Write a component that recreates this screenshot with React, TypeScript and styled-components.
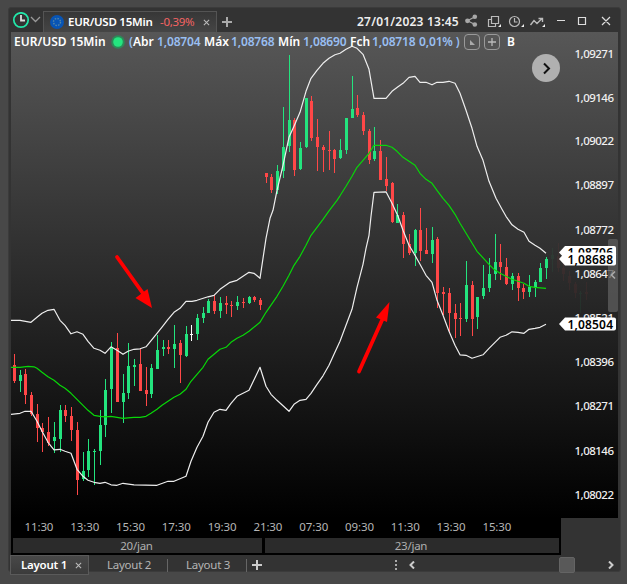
import React from 'react';
import styled, { createGlobalStyle } from 'styled-components';

const BLUE = '#99bff2';
const GREEN = '#23e47e';
const RED = '#ff4747';

const GlobalStyle = createGlobalStyle`
  * { box-sizing: border-box; }
  body { margin: 0; background: #484848; font-family: "Noto Sans", "Open Sans", sans-serif; overflow: hidden; }
  svg { display: block; flex: none; }
`;

const Page = styled.main`
  width: 627px;
  height: 584px;
  padding: 7px 6px 12px 8px;
  background: #484848;
`;

const Window = styled.section`
  width: 613px;
  height: 565px;
  padding: 0 2px;
  background: #333;
  border: 1px solid #3b3b3b;
  border-radius: 3px;
  display: flex;
  flex-direction: column;
`;

const TitleBar = styled.header`
  height: 24px;
  display: flex;
  align-items: flex-end;
  flex: none;
`;

const ClockMenu = styled.div`
  width: 32px;
  height: 24px;
  padding: 4px 0 0 1px;
`;

const InstrumentTab = styled.div`
  width: 174px;
  height: 21px;
  padding: 0 6px 0 6px;
  background: linear-gradient(#373737, #454545);
  border: 1px solid #545454;
  border-bottom: 0;
  display: flex;
  align-items: center;
`;

const Label = styled.span<{ $w: number; $size?: number; $color?: string; $weight?: number; $ml?: number; $ls?: number }>`
  width: ${p => p.$w}px;
  margin-left: ${p => p.$ml ?? 0}px;
  font-size: ${p => p.$size ?? 11}px;
  font-weight: ${p => p.$weight ?? 600};
  letter-spacing: ${p => p.$ls ?? 0}px;
  color: ${p => p.$color ?? '#fff'};
  line-height: 16px;
  white-space: nowrap;
  flex: none;
`;

const QuoteText = styled.span<{ $w: number; $blue?: boolean; $ml?: number }>`
  width: ${p => p.$w}px;
  margin-left: ${p => p.$ml ?? 0}px;
  font-size: 12px;
  font-weight: 600;
  letter-spacing: ${p => (p.$blue ? -0.15 : 0)}px;
  color: ${p => (p.$blue ? BLUE : '#fff')};
  line-height: 16px;
  white-space: nowrap;
  flex: none;
`;

const Paren = styled.span`
  color: ${BLUE};
`;

const TitleTools = styled.div`
  flex: 1;
  height: 21px;
  display: flex;
  align-items: center;
`;

const IconSlot = styled.div<{ $w: number; $ml: number }>`
  width: ${p => p.$w}px;
  margin-left: ${p => p.$ml}px;
  flex: none;
`;

const ChartArea = styled.div`
  width: 607px;
  height: 486px;
  position: relative;
  flex: none;
`;

const Quote = styled.div`
  position: absolute;
  left: 3px;
  top: 2px;
  height: 16px;
  display: flex;
  align-items: center;
`;

const SquareButton = styled.span<{ $ml: number }>`
  width: 16px;
  height: 16px;
  margin-left: ${p => p.$ml}px;
  border: 1px solid #999;
  border-radius: 4px;
  display: flex;
  align-items: center;
  justify-content: center;
  flex: none;
`;

const NextButton = styled.button`
  position: absolute;
  left: 521px;
  top: 22px;
  width: 28px;
  height: 28px;
  padding: 0;
  border: 0;
  border-radius: 50%;
  background: #b0b0b0;
`;

const TimeAxis = styled.div`
  width: 550px;
  height: 37px;
  background: #000;
  flex: none;
`;

const Hours = styled.div`
  height: 20px;
  padding-left: 5px;
  display: flex;
`;

const Hour = styled.span`
  width: 45.8px;
  font-size: 11.5px;
  line-height: 18px;
  text-align: center;
  color: #b6b6b6;
  letter-spacing: -0.1px;
  flex: none;
`;

const Days = styled.div`
  display: flex;
  gap: 3px;
  padding: 0 2px;
`;

const Day = styled.span<{ $w: number }>`
  width: ${p => p.$w}px;
  height: 15px;
  padding-right: 2px;
  background: #2b2b2b;
  color: #b0b0b0;
  font-size: 11.5px;
  letter-spacing: -0.25px;
  line-height: 16px;
  text-align: center;
`;

const TabBar = styled.footer`
  height: 20px;
  display: flex;
  align-items: center;
  margin-left: -1px;
  flex: none;
`;

const LayoutTab = styled.div<{ $w: number; $active?: boolean }>`
  width: ${p => p.$w}px;
  height: 20px;
  display: flex;
  align-items: center;
  border: 1px solid ${p => (p.$active ? '#5a5a5a' : 'transparent')};
  background: ${p => (p.$active ? 'linear-gradient(#484848, #3b3b3b)' : 'transparent')};
  flex: none;
`;

const Divider = styled.i`
  width: 1px;
  height: 13px;
  background: #666;
`;

const ScrollThumb = styled.div`
  width: 16px;
  height: 16px;
  margin: 0 33px 0 144px;
  border: 1px solid #646464;
  border-radius: 2px;
  background: #595959;
`;

// x, high, low, body top, body bottom, kind (g = up, r = down, w = flat)
const candles: [number, number, number, number, number, string][] = [
  [14, 354, 383, 365, 381, 'r'], [20, 370, 392, 375, 381, 'g'], [25, 369, 404, 374, 395, 'r'],
  [31, 392, 416, 395, 414, 'r'], [37, 404, 442, 414, 428, 'r'], [42, 423, 452, 428, 432, 'r'],
  [48, 417, 446, 432, 443, 'r'], [54, 422, 453, 437, 441, 'g'], [60, 405, 452, 410, 439, 'g'],
  [65, 405, 422, 410, 416, 'r'], [71, 407, 441, 416, 430, 'r'], [77, 422, 495, 430, 480, 'r'],
  [83, 452, 481, 471, 479, 'g'], [88, 439, 477, 451, 470, 'g'], [94, 449, 485, 451, 452, 'g'],
  [100, 410, 465, 425, 451, 'g'], [105, 379, 437, 390, 425, 'g'], [111, 342, 413, 347, 389, 'g'],
  [117, 333, 402, 348, 402, 'r'], [123, 374, 423, 393, 402, 'g'], [128, 343, 399, 366, 393, 'g'],
  [134, 359, 386, 365, 367, 'g'], [140, 349, 391, 364, 391, 'r'], [146, 367, 406, 390, 394, 'r'],
  [151, 364, 398, 368, 394, 'g'], [157, 335, 369, 350, 369, 'g'], [163, 340, 356, 347, 349, 'g'],
  [168, 340, 354, 347, 349, 'r'], [174, 325, 368, 344, 349, 'g'], [180, 340, 383, 343, 355, 'r'],
  [186, 326, 357, 334, 356, 'g'], [191, 325, 341, 334, 335, 'w'], [197, 314, 340, 318, 334, 'g'],
  [203, 307, 323, 313, 318, 'g'], [208, 299, 313, 301, 313, 'g'], [214, 295, 314, 301, 311, 'r'],
  [220, 297, 318, 303, 311, 'g'], [226, 296, 314, 303, 305, 'r'], [231, 301, 317, 305, 306, 'r'],
  [237, 296, 310, 302, 306, 'g'], [243, 298, 308, 302, 303, 'r'], [249, 296, 304, 297, 303, 'g'],
  [254, 296, 302, 297, 300, 'r'], [260, 298, 310, 300, 305, 'r'], [266, 173, 183, 173, 177, 'r'],
  [271, 174, 193, 177, 190, 'r'], [277, 165, 194, 171, 190, 'g'], [283, 107, 178, 147, 171, 'g'],
  [289, 55, 152, 120, 146, 'g'], [294, 118, 176, 120, 170, 'r'], [300, 142, 170, 148, 169, 'g'],
  [306, 98, 148, 98, 147, 'g'], [311, 96, 141, 101, 138, 'r'], [317, 119, 171, 137, 147, 'r'],
  [323, 145, 172, 147, 150, 'r'], [329, 131, 170, 150, 151, 'r'], [334, 149, 173, 150, 159, 'r'],
  [340, 139, 159, 150, 158, 'g'], [346, 118, 154, 118, 150, 'g'], [352, 76, 118, 109, 118, 'g'],
  [357, 95, 117, 108, 115, 'r'], [363, 112, 135, 115, 131, 'r'], [369, 129, 164, 131, 160, 'r'],
  [374, 127, 161, 151, 159, 'g'], [380, 140, 180, 151, 180, 'r'], [386, 157, 191, 179, 186, 'r'],
  [392, 182, 223, 183, 222, 'r'], [397, 204, 223, 215, 223, 'g'], [403, 212, 258, 215, 244, 'r'],
  [409, 234, 255, 244, 253, 'r'], [415, 229, 266, 230, 253, 'g'], [420, 208, 261, 230, 251, 'r'],
  [426, 228, 254, 250, 254, 'r'], [432, 227, 263, 240, 254, 'g'], [437, 237, 308, 239, 293, 'r'],
  [443, 287, 315, 292, 294, 'r'], [449, 288, 332, 293, 313, 'r'], [455, 304, 338, 313, 319, 'r'],
  [460, 303, 336, 318, 319, 'r'], [466, 261, 322, 285, 319, 'g'], [472, 281, 336, 285, 319, 'r'],
  [477, 297, 329, 297, 317, 'g'], [483, 265, 299, 288, 296, 'g'], [489, 258, 292, 274, 288, 'g'],
  [495, 234, 280, 262, 274, 'g'], [500, 244, 280, 262, 267, 'r'], [506, 258, 285, 267, 284, 'r'],
  [512, 273, 290, 276, 284, 'g'], [518, 273, 301, 276, 288, 'r'], [523, 284, 299, 288, 292, 'r'],
  [529, 275, 297, 287, 292, 'g'], [535, 280, 297, 282, 288, 'g'], [540, 263, 282, 268, 282, 'g'],
  [546, 257, 279, 259, 268, 'g'],
];

// Later candles, faded out under the price scale
const faded: [number, number, number, number, number, string][] = [
  [552, 248, 272, 255, 259, 'g'], [558, 243, 272, 256, 268, 'r'], [563, 262, 281, 268, 274, 'r'],
  [569, 271, 290, 276, 283, 'r'], [575, 282, 298, 284, 293, 'r'], [580, 291, 313, 293, 294, 'g'],
  [586, 282, 300, 292, 294, 'r'],
];

const upper = '11,320 20,320 31,322 37,317 42,313 48,310 54,309 60,320 65,325 71,333.5 77,331.5 83,334 88,341 94,348 100,350 105,353 111,346.5 117,350 123,354 128,351 134,349 140,348.5 146,346.5 157,333 163,325.5 168,319 174,312 180,308 186,301 192,301 197,300 208,296.5 214,295 220,289 230,282 237,280 249,272 254,273 260,278 266,238 270,218 273,210 277,190 283,165 289,137 294,126 300,112 306,91 311,78 317,70 323,63 329,58 335,54.5 340,53 346,49 352,46 357,48 363,54 369,69 374,98 386,98 392,91 398,86.5 403,83 409,77 415,76 420,82 426,82 432,84.5 437,82 443,82 449,81 455,83 460,93 466,110 472,128 477,146 483,160 489,181 496,198 502,209 506,216 512,224.5 518,229 524,232 529,241 535,245 540,248 546,253';
const middle = '11,367 20,367 28,366 34,366.5 37,368 42,372 48,376.5 54,380 60,385 65,388 71,393 77,399 83,405 88,410 94,415 100,416 105,416.5 111,416 123,418 128,417.5 134,417 140,417 146,416 151,413 157,409 162,405 168,401 174,397 180,394 186,389 191,381 197,374 203,367 208,359 214,354 220,349 226,347 231,342 237,338 243,335 249,331 260,322 266,312 277,296 283,286 289,275 294,265 300,256 306,245 311,235 317,227 323,219 329,210.5 337,200 340,195.5 346,186 352,176 357,167 363,160 369,153 374,145 386,145 392,147 397,151 403,157 409,161 415,165 420,173 426,179 432,183 437,190 443,198 449,205 455,214 460,223 477,251 489,264 494,269 500,273 506,276 512,279 518,281 524,283 529,286 535,287 546,288';
const lower = '11,414 20,413 25,411 31,411 37,421 42,431 48,442 54,449.5 60,449 65,451 71,453 77,469 83,476 88,480 94,482 100,483 105,482 111,484.5 117,485 123,483 134,484.5 157,485 168,481 174,481 186,476 191,461 197,447 203,436 208,422 214,412 220,409 226,410 231,403 237,396 249,390 260,367 266,386 271,394 277,400 289,411 294,404 300,400 306,399 311,393 317,384 323,375.5 329,365 334,354 340,341 346,325 352,309 357,287 363,264 366,248 369,235 371,216 374,192 386,191.5 392,203 398,216 403,230 409,245 415,255 420,264 426,275 432,282 437,300 443,315 449,331 455,345 460,354.5 466,355 472,358 483,354.5 489,348 495,342 500,337 506,335 512,331.5 518,332 524,333 529,329 535,328 540,327 546,324';

const prices: [string, number][] = [
  ['1,09271', 54], ['1,09146', 98], ['1,09022', 141], ['1,08897', 185], ['1,08772', 230], ['1,08647', 274],
  ['1,08521', 318], ['1,08396', 362], ['1,08271', 406], ['1,08146', 451], ['1,08022', 495],
];
const tags: [string, number][] = [['1,08706', 252.5], ['1,08688', 259], ['1,08504', 324]];

const PriceText = styled.text<{ $tag?: boolean }>`
  font-family: "Noto Sans", sans-serif;
  font-size: ${p => (p.$tag ? 12 : 11.5)}px;
  font-weight: ${p => (p.$tag ? 600 : 500)};
  fill: ${p => (p.$tag ? '#000' : '#f0f0f0')};
`;

const Candles = ({ data }: { data: typeof candles }) => (
  <>
    {data.map(([x, hi, lo, top, bottom, kind]) => (
      <g key={x} fill={kind === 'g' ? GREEN : kind === 'r' ? RED : '#fff'}>
        <rect x={x} y={hi} width="1" height={lo - hi} />
        <rect x={x - 1} y={top} width="3" height={bottom - top} />
      </g>
    ))}
  </>
);

const Chart = () => (
  <svg width="607" height="486" viewBox="11 32 607 486">
    <defs>
      <linearGradient id="sky" x1="0" y1="0" x2="0" y2="1">
        <stop offset="0" stopColor="#575757" />
        <stop offset="1" stopColor="#000" />
      </linearGradient>
    </defs>
    <rect x="11" y="32" width="607" height="486" fill="url(#sky)" />
    <g shapeRendering="crispEdges">
      <Candles data={candles} />
      <g opacity="0.06"><Candles data={faded} /></g>
    </g>
    <g fill="none" strokeWidth="1.2" strokeLinejoin="round" transform="translate(0 .3)">
      <polyline points={middle} stroke="#08d808" />
      <polyline points={upper} stroke="#eee" />
      <polyline points={lower} stroke="#eee" />
    </g>
    <g fill="#f00" stroke="#f00">
      <path d="M117 257L144.500 295.500" strokeWidth="3.8" strokeLinecap="round" />
      <path d="M152 308L135.500 298L147.500 289Z" stroke="none" />
      <path d="M359 371.500L383 318" strokeWidth="3.8" strokeLinecap="round" />
      <path d="M389.500 302L376 317.500L387 322Z" stroke="none" />
    </g>
    {prices.map(([t, y]) => (
      <PriceText key={t} x="574.5" y={y + 4} textLength="39.5">{t}</PriceText>
    ))}
    <rect x="608" y="239" width="10" height="73" rx="2" fill="#5c5c5c" fillOpacity="0.78" />
    <path d="M615 271.500L611.500 275L615 278.500" fill="none" stroke="#aaa" strokeWidth="1.6" />
    {tags.map(([t, y]) => (
      <g key={t}>
        <path d={`M559 ${y}L565 ${y - 6.5}H614Q616 ${y - 6.5} 616 ${y - 4.5}V${y + 4.5}Q616 ${y + 6.5} 614 ${y + 6.5}H565Z`} fill="#fff" />
        <PriceText $tag x="567.5" y={y + 4.5} textLength="45.5">{t}</PriceText>
      </g>
    ))}
  </svg>
);

const Cross = ({ size = 7, color = '#bbb', width = 1.2 }: { size?: number; color?: string; width?: number }) => (
  <svg width={size} height={size} viewBox="0 0 8 8" fill="none" stroke={color} strokeWidth={width}><path d="M1 1L7 7M7 1L1 7" /></svg>
);
const Plus = ({ size = 10, color = '#aaa', width = 2 }: { size?: number; color?: string; width?: number }) => (
  <svg width={size} height={size} viewBox="0 0 10 10" stroke={color} strokeWidth={width}><path d="M5 0V10M0 5H10" /></svg>
);
const Chevron = ({ color, left }: { color: string; left?: boolean }) => (
  <svg width="6" height="8" viewBox="0 0 6 8" fill="none" stroke={color} strokeWidth="2"><path d={left ? 'M5 .5L1.5 4L5 7.5' : 'M1 .5L4.5 4L1 7.5'} /></svg>
);

const WindowIcons = () => (
  <svg width="150" height="20" viewBox="465 10 150 20" fill="none" stroke="#bbb" strokeWidth="1.2">
    <g transform="translate(0 -.5)">
      <path d="M475 15.3L467.5 19.3L475 23" stroke="#a8a8a8" />
      <g fill="#a8a8a8" stroke="none"><circle cx="474.8" cy="15.3" r="2.3" /><circle cx="467.5" cy="19.3" r="2.4" /><circle cx="474.8" cy="23" r="2.3" /></g>
    </g>
    <path d="M491.5 14.5H498.5V21.5H491.5ZM491.5 17.5H488.5V24.5H495.5V21.5" />
    <circle cx="514.5" cy="19.5" r="5" /><path d="M514.5 16V20H517.5" />
    <path d="M530.5 23L534 18.5L537 21.5L542 16.5M538.5 16.5H542.5V20" strokeWidth="1.4" />
    <path d="M498 25H501V22ZM521 25H524V22ZM542 25H545V22Z" fill="#eee" stroke="none" />
    <path d="M557 18.5H565M578.5 15.5H585.5V22.5H578.5ZM602 15L610 23M610 15L602 23" stroke="#ddd" />
  </svg>
);

export default function App() {
  return (
    <Page>
      <GlobalStyle />
      <Window>
        <TitleBar>
          <ClockMenu>
            <svg width="30" height="18" viewBox="12 12 30 18" fill="none">
              <circle cx="21" cy="20" r="7.2" stroke="#22e8aa" strokeWidth="1.7" />
              <path d="M21 15V20.500H25" stroke="#ddd" strokeWidth="1.8" />
              <path d="M31 17L35.500 21.500L40 17" stroke="#999" strokeWidth="1.3" />
            </svg>
          </ClockMenu>
          <InstrumentTab>
            <svg width="14" height="14" viewBox="0 0 14 14">
              <circle cx="7" cy="7" r="7" fill="#0754b5" />
              <circle cx="7" cy="7" r="3.5" fill="none" stroke="#5786a4" strokeWidth="1.4" strokeDasharray="1.5 1.25" />
            </svg>
            <Label $w={86} $ml={4} $size={11.5} $ls={-0.25}>EUR/USD 15Min</Label>
            <Label $w={43} $ml={6} $size={11.5} $color="#f56464" $weight={400} $ls={-0.3}>-0,39%</Label>
            <Cross />
          </InstrumentTab>
          <TitleTools>
            <IconSlot $w={135} $ml={5}><Plus /></IconSlot>
            <Label $w={108} $size={12} $color="#eee" $ls={0.22}>27/01/2023 13:45</Label>
            <WindowIcons />
          </TitleTools>
        </TitleBar>
        <ChartArea>
          <Chart />
          <Quote>
            <QuoteText $w={97}>EUR/USD 15Min</QuoteText>
            <svg width="14" height="14" viewBox="0 0 14 14"><circle cx="7" cy="7" r="6.8" fill="#2c8a58" /><circle cx="7" cy="7" r="4.8" fill="#24e57f" /></svg>
            <QuoteText $w={28} $ml={4}><Paren>(</Paren>Abr</QuoteText>
            <QuoteText $w={47} $blue>1,08704</QuoteText>
            <QuoteText $w={27}>Máx</QuoteText>
            <QuoteText $w={47} $blue>1,08768</QuoteText>
            <QuoteText $w={25}>Mín</QuoteText>
            <QuoteText $w={47} $blue>1,08690</QuoteText>
            <QuoteText $w={22}>Fch</QuoteText>
            <QuoteText $w={47} $blue>1,08718</QuoteText>
            <QuoteText $w={45} $blue>0,01% )</QuoteText>
            <SquareButton $ml={0}><svg width="7" height="7" viewBox="0 0 7 7"><path d="M1 1L6 6H1Z" fill="#aaa" /></svg></SquareButton>
            <SquareButton $ml={4}><Plus size={8} color="#bbb" width={1.6} /></SquareButton>
            <QuoteText $w={12} $ml={7}>B</QuoteText>
          </Quote>
          <NextButton aria-label="next">
            <svg width="28" height="28" viewBox="0 0 28 28" fill="none" stroke="#111" strokeWidth="2"><path d="M12 9.500L17 14.500L12 19.500" /></svg>
          </NextButton>
        </ChartArea>
        <TimeAxis>
          <Hours>
            {['11:30', '13:30', '15:30', '17:30', '19:30', '21:30', '07:30', '09:30', '11:30', '13:30', '15:30'].map((t, i) => <Hour key={i}>{t}</Hour>)}
          </Hours>
          <Days><Day $w={249}>20/jan</Day><Day $w={294}>23/jan</Day></Days>
        </TimeAxis>
        <TabBar>
          <LayoutTab $active $w={79}>
            <Label $w={54} $ml={10} $size={11.5} $ls={-0.25}>Layout 1</Label><Cross />
          </LayoutTab>
          <LayoutTab $w={78}><Label $w={50} $ml={17} $size={11.5} $weight={400} $ls={-0.25} $color="#b5b5b5">Layout 2</Label></LayoutTab>
          <Divider />
          <LayoutTab $w={78}><Label $w={50} $ml={17} $size={11.5} $weight={400} $ls={-0.25} $color="#b5b5b5">Layout 3</Label></LayoutTab>
          <Divider />
          <LayoutTab $w={148}><IconSlot $w={12} $ml={4}><Plus color="#ccc" /></IconSlot></LayoutTab>
          <svg width="14" height="12" viewBox="0 0 14 12" fill="#aaa"><path d="M0 1H2V3H0ZM0 5H2V7H0ZM0 9H2V11H0Z" /></svg>
          <Chevron left color="#ccc" />
          <ScrollThumb />
          <Chevron color="#ccc" />
        </TabBar>
      </Window>
    </Page>
  );
}
